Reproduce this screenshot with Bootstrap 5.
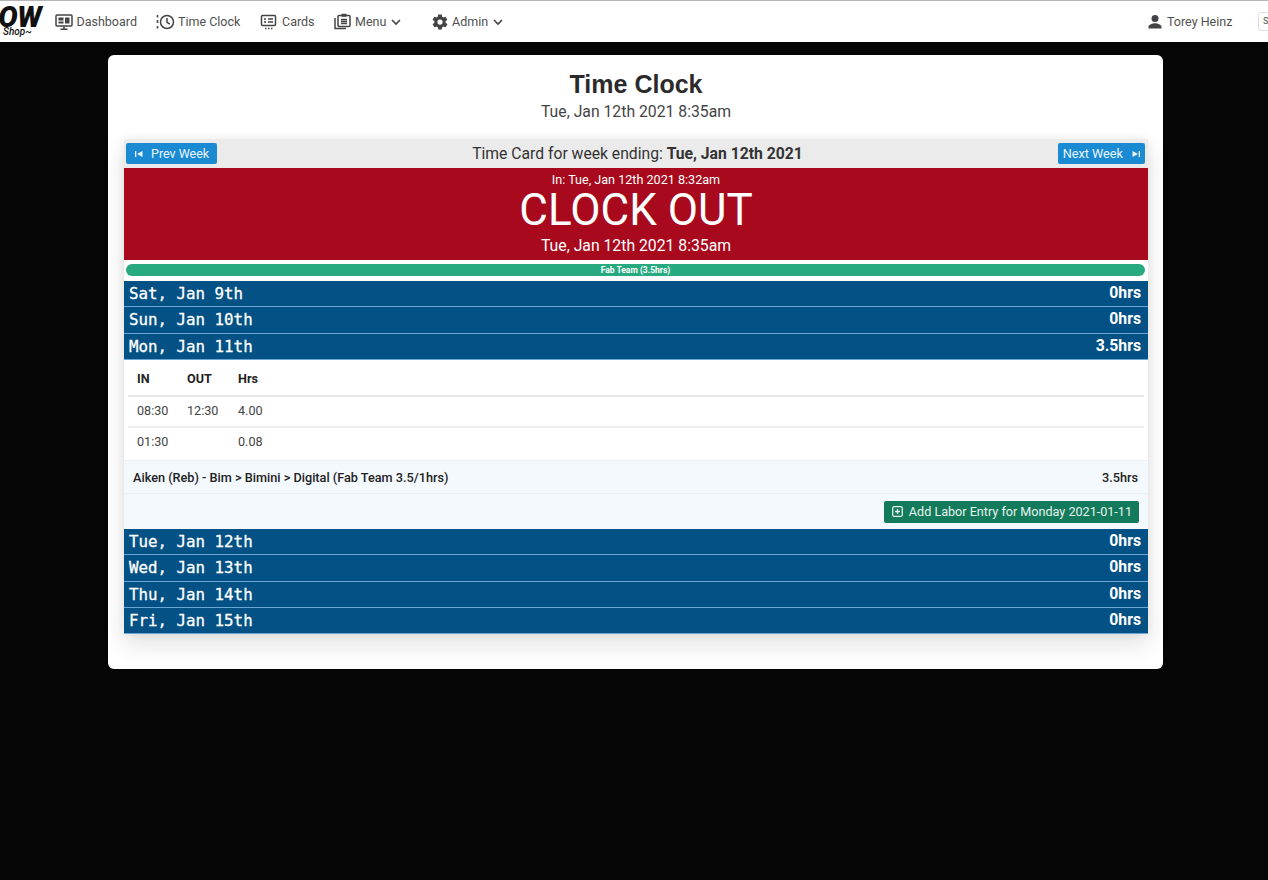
<!DOCTYPE html>
<html lang="en">
<head>
  <meta charset="UTF-8">
  <title>Time Clock</title>
  <meta name="viewport" content="width=device-width, initial-scale=1">
  <link href="https://cdn.jsdelivr.net/npm/bootstrap@5.3.2/dist/css/bootstrap.min.css" rel="stylesheet">
  <style>
    body {
      background: #050505;
      min-height: 880px;
      font-family: Roboto, sans-serif;
      overflow: hidden;
    }
    .top-bar {
      height: 42px;
      background: #fff;
      border-top: 1px solid #b5b5b5;
      color: #505050;
      font-size: 12.5px;
      white-space: nowrap;
      overflow: hidden;
    }
    .brand-box { width: 41px; line-height: 1; color: #111; }
    .brand-big {
      display: flex; justify-content: flex-end;
      font: italic 900 29px/19px Roboto, sans-serif; padding-top: 7px; height: 26px; letter-spacing: -.6px;
    }
    .brand-small { font: italic 500 10px/10px Roboto, sans-serif; padding-left: 3px; }
    .top-item { display: flex; align-items: center; gap: 4px; position: absolute; top: 11px; height: 20px; }
    .top-icon { width: 18px; height: 18px; fill: none; stroke: #444; stroke-width: 1.5; flex: none; }
    .top-icon.solid { fill: #444; stroke: none; }
    .chev { width: 10px; height: 10px; fill: none; stroke: #444; stroke-width: 1.6; margin-left: 1px; }
    .search-stub {
      position: absolute; left: 1258px; top: 11px; width: 30px; height: 19px;
      border: 1px solid #ddd; border-radius: 3px; font-size: 9px; padding: 2px 0 0 4px;
    }
    .page-card {
      width: 1055px;
      height: 614px;
      margin: 13px 0 0 108px;
      padding: 14px 15px 0 16px;
      background: #fff;
      border-radius: 6px;
    }
    .page-title { font: 700 25px/30px "Liberation Sans", sans-serif; color: #2b2b2b; margin: 0; }
    .page-sub { font-size: 15.75px; line-height: 22px; color: #444; margin: 2px 0 16px; }
    .clock-wrap { box-shadow: 0 10px 22px rgba(0,0,0,.12), 0 0 8px rgba(0,0,0,.06); }
    .week-bar {
      height: 29px; background: #ebebeb; padding: 0 3px 0 2px;
      font-size: 15.7px; color: #333;
    }
    .week-bar b { font-weight: 700; }
    .week-btn {
      background: #1a8bd3; color: #eaf5fc; font-size: 12.7px; line-height: 19px; gap: 9px;
      padding: 1px 5px; border-radius: 2px; border: 0; height: 21px;
    }
    .week-btn:hover { background: #1a8bd3; color: #eaf5fc; }
    .week-btn svg { width: 8px; height: 8px; fill: #eaf5fc; }
    .week-btn.go-back { padding: 1px 8px 1px 9px; font-size: 12.5px; gap: 8px; }
    .clock-out {
      height: 92px; background: #a8091c; color: #fff; text-align: center; padding-top: 5px;
    }
    .clock-in { font-size: 12.6px; line-height: 14px; }
    .clock-big { font-size: 44px; line-height: 47px; font-weight: 400; }
    .clock-now { font-size: 15.75px; line-height: 22px; margin-top: 1px; }
    .team-line { padding: 4px 3px 5px 2px; }
    .team-bar {
      height: 12px; border-radius: 6px; background: #27aa80; color: #fff;
      font-size: 8.5px; font-weight: 700; line-height: 12px; text-align: center;
    }
    .day-row {
      height: 26.25px; background: #045185; color: #fff; padding: 0 7px 0 5px;
      border-bottom: 1px solid #6aa6d4;
    }
    .day-name {
      font: 400 15.8px/26px "DejaVu Sans Mono", monospace;
      -webkit-text-stroke: .3px #fff;
    }
    .day-hrs { font-size: 15.75px; font-weight: 700; line-height: 24px; }
    .punch-area { background: #fff; padding: 0 4px; height: 100.5px; }
    .punch-table { margin: 0; font-size: 12.6px; color: #444; }
    .punch-table th, .punch-table td {
      border: 0; padding: 0; vertical-align: middle; background: transparent; color: inherit;
    }
    .punch-table th { color: #222; height: 36px; padding-top: 5px; border-bottom: 2px solid #e9e9e9; font-weight: 700; }
    .punch-table td { height: 31px; border-bottom: 2px solid #eee; }
    .punch-table tr:last-child td { border-bottom: 0; }
    .punch-table .c-in { padding-left: 9px; width: 59px; }
    .punch-table .c-out { width: 51px; }
    .labor-row {
      height: 34px; background: #f4f9fe; font-size: 12.7px; font-weight: 500; color: #222;
      padding: 0 10px 0 9px; border-top: 1px solid #edf1f5; border-bottom: 1px solid #edf1f5;
    }
    .labor-add { height: 34.75px; background: #f4f9fe; padding: 0 9px 0 0; }
    .add-btn {
      background: #137a5c; color: #e6f3ee; font-size: 12.6px; line-height: 20px; height: 22px;
      padding: 1px 7px 1px 8px; border-radius: 2px; border: 0;
    }
    .add-btn:hover { background: #137a5c; color: #e6f3ee; }
    .add-btn svg { width: 11px; height: 11px; fill: none; stroke: #e6f3ee; stroke-width: 1.3; margin-right: 6px; }
  </style>
</head>
<body>
  <div class="top-bar position-relative">
    <div class="brand-box">
      <div class="brand-big">OW</div>
      <div class="brand-small">Shop~</div>
    </div>
    <div class="top-item" style="left:55px">
      <svg class="top-icon" viewBox="0 0 18 18"><rect x="1" y="2" width="16" height="11" rx="1"/><rect x="3.500" y="4.500" width="5" height="3" fill="#444" stroke="none"/><rect x="10" y="4.500" width="4.500" height="6" fill="#444" stroke="none"/><rect x="3.500" y="8.500" width="5" height="2" fill="#444" stroke="none"/><path d="M9 13v3M5.500 16.300h7"/></svg>
      <span style="margin-left:-.5px">Dashboard</span>
    </div>
    <div class="top-item" style="left:156px">
      <svg class="top-icon" style="width:21px" viewBox="0 0 21 18"><path d="M1.500 2v2.500M1.500 7v3M1.500 13v2.500" stroke-width="1.600"/><circle cx="11" cy="9" r="6.500"/><path d="M11 5v4.300l2.800 1.700"/></svg>
      <span style="margin-left:-3px">Time Clock</span>
    </div>
    <div class="top-item" style="left:260px">
      <svg class="top-icon" viewBox="0 0 18 18"><rect x="1.500" y="2.500" width="14" height="10" rx="1"/><path d="M4 6h2M8 6h5M4 9h2M8 9h5"/><path d="M5 15.500h1.500M8 15.500h1.500M11 15.500h1.500"/></svg>
      <span>Cards</span>
    </div>
    <div class="top-item" style="left:334px">
      <svg class="top-icon" viewBox="0 0 18 18"><path d="M1 5v10.500h11"/><rect x="4" y="2.500" width="12" height="11" rx="1"/><rect x="7.500" y=".8" width="5" height="3" fill="#444" stroke="none"/><path d="M7 6.500h6M7 8.500h6M7 10.500h6"/></svg>
      <span style="margin-left:-1px">Menu</span>
      <svg class="chev" viewBox="0 0 10 10"><path d="M1 3l4 4 4-4"/></svg>
    </div>
    <div class="top-item" style="left:431px">
      <svg class="top-icon solid" viewBox="0 0 24 24"><path d="M19.400 13c.04-.3.1-.7.1-1s-.06-.7-.1-1l2.100-1.600c.2-.15.25-.4.12-.65l-2-3.450c-.12-.22-.38-.3-.6-.22l-2.500 1c-.5-.4-1.100-.7-1.700-1l-.4-2.650c-.03-.24-.24-.42-.5-.42h-4c-.25 0-.46.18-.5.42l-.38 2.650c-.6.260-1.200.6-1.700 1l-2.500-1c-.22-.09-.48 0-.6.22l-2 3.450c-.13.220-.07.500.12.650L4.600 11c-.04.3-.1.7-.1 1s.06.7.1 1l-2.100 1.650c-.2.150-.25.430-.12.650l2 3.450c.12.220.38.300.6.220l2.500-1c.5.400 1.100.7 1.700 1l.38 2.650c.04.240.25.420.5.420h4c.25 0 .46-.18.5-.42l.38-2.650c.6-.260 1.200-.6 1.700-1l2.500 1c.22.09.48 0 .6-.22l2-3.450c.12-.22.07-.5-.12-.65L19.400 13zM12 15.500a3.500 3.500 0 1 1 0-7 3.500 3.500 0 0 1 0 7z"/></svg>
      <span style="margin-left:-1px">Admin</span>
      <svg class="chev" viewBox="0 0 10 10"><path d="M1 3l4 4 4-4"/></svg>
    </div>
    <div class="top-item" style="left:1146px">
      <svg class="top-icon solid" viewBox="0 0 18 18"><circle cx="9" cy="5.500" r="3.500"/><path d="M2.500 15.500v-1.700c0-2.300 4.300-3.500 6.500-3.500s6.500 1.200 6.500 3.500v1.700z"/></svg>
      <span style="margin-left:-1px">Torey Heinz</span>
    </div>
    <div class="search-stub">S</div>
  </div>

  <div class="page-card">
    <div class="text-center">
      <h1 class="page-title">Time Clock</h1>
      <div class="page-sub">Tue, Jan 12th 2021 8:35am</div>
    </div>

    <div class="clock-wrap">
      <div class="week-bar d-flex justify-content-between align-items-center">
        <button class="btn week-btn go-back d-flex align-items-center">
          <svg viewBox="0 0 8 8"><rect x="0" y="1" width="1.300" height="6"/><path d="M7.500 1v6L2 4z"/></svg>
          <span>Prev Week</span>
        </button>
        <div>Time Card for week ending: <b>Tue, Jan 12th 2021</b></div>
        <button class="btn week-btn d-flex align-items-center">
          <span>Next Week</span>
          <svg viewBox="0 0 8 8"><path d="M.5 1v6L6 4z"/><rect x="6.700" y="1" width="1.300" height="6"/></svg>
        </button>
      </div>

      <div class="clock-out">
        <div class="clock-in">In: Tue, Jan 12th 2021 8:32am</div>
        <div class="clock-big">CLOCK OUT</div>
        <div class="clock-now">Tue, Jan 12th 2021 8:35am</div>
      </div>

      <div class="team-line bg-white">
        <div class="team-bar">Fab Team (3.5hrs)</div>
      </div>

      <div class="day-row d-flex justify-content-between"><span class="day-name">Sat, Jan 9th</span><span class="day-hrs">0hrs</span></div>
      <div class="day-row d-flex justify-content-between"><span class="day-name">Sun, Jan 10th</span><span class="day-hrs">0hrs</span></div>
      <div class="day-row d-flex justify-content-between"><span class="day-name">Mon, Jan 11th</span><span class="day-hrs">3.5hrs</span></div>

      <div class="punch-area">
        <table class="table punch-table">
          <thead>
            <tr><th class="c-in">IN</th><th class="c-out">OUT</th><th>Hrs</th></tr>
          </thead>
          <tbody>
            <tr><td class="c-in">08:30</td><td class="c-out">12:30</td><td>4.00</td></tr>
            <tr><td class="c-in">01:30</td><td class="c-out"></td><td>0.08</td></tr>
          </tbody>
        </table>
      </div>
      <div class="labor-row d-flex justify-content-between align-items-center">
        <span>Aiken (Reb) - Bim &gt; Bimini &gt; Digital (Fab Team 3.5/1hrs)</span>
        <span>3.5hrs</span>
      </div>
      <div class="labor-add d-flex justify-content-end align-items-center">
        <button class="btn add-btn d-flex align-items-center">
          <svg viewBox="0 0 11 11"><rect x=".7" y=".7" width="9.600" height="9.600" rx="1.500"/><path d="M5.500 3v5M3 5.500h5"/></svg>
          <span>Add Labor Entry for Monday 2021-01-11</span>
        </button>
      </div>

      <div class="day-row d-flex justify-content-between"><span class="day-name">Tue, Jan 12th</span><span class="day-hrs">0hrs</span></div>
      <div class="day-row d-flex justify-content-between"><span class="day-name">Wed, Jan 13th</span><span class="day-hrs">0hrs</span></div>
      <div class="day-row d-flex justify-content-between"><span class="day-name">Thu, Jan 14th</span><span class="day-hrs">0hrs</span></div>
      <div class="day-row d-flex justify-content-between"><span class="day-name">Fri, Jan 15th</span><span class="day-hrs">0hrs</span></div>
    </div>
  </div>

  <script src="https://cdn.jsdelivr.net/npm/bootstrap@5.3.2/dist/js/bootstrap.bundle.min.js"></script>
</body>
</html>
